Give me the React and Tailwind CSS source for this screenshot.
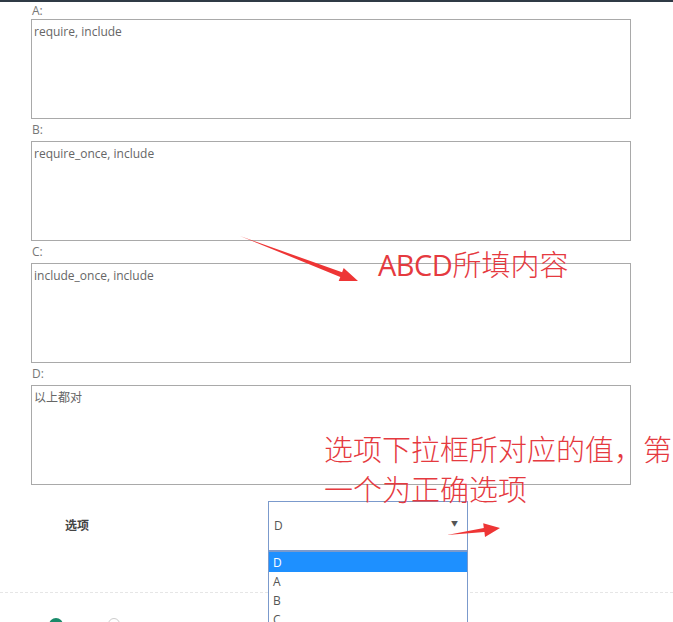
import React from "react";

const items = [
  { k: "A:", v: "require, include" },
  { k: "B:", v: "require_once, include" },
  { k: "C:", v: "include_once, include" },
  { k: "D:", v: "以上都对" },
];

export default function App() {
  return (
    <div className="relative w-[673px] h-[622px] overflow-hidden bg-white font-['Open_Sans','Noto_Sans_CJK_SC',sans-serif] text-[12px] text-[#555]">
      <div className="h-[2px] bg-[#2f3a45]" />
      <div className="pl-[31px]">
        {items.map((it, i) => (
          <div key={it.k}>
            <div className={`flex items-center pl-px ${i === 0 ? "h-[17px]" : "h-[22px]"} text-[#777]`}>{it.k}</div>
            <div className="w-[600px] h-[100px] border border-[#a9a9a9] px-[2px] pt-[3px] leading-[17px] text-[#666]">
              {it.v}
            </div>
          </div>
        ))}
      </div>
      <div className="flex items-center mt-[16px] h-[50px]">
        <div className="w-[268px] pl-[65px] font-bold text-[#444]">选项</div>
        <div className="relative w-[200px] h-[50px] border border-[#7b9acc] flex items-center px-[5px] text-[#555]">
          <span className="flex-1">D</span>
          <span className="text-[7px] text-[#555] pr-[4px] pb-[3px]">▼</span>
          <div className="absolute left-[-1px] top-[49px] w-[200px] bg-white border border-[#7b9acc] z-10 leading-[19px]">
            <div className="bg-[#1e90ff] text-white px-[4px] h-[20px] flex items-center">D</div>
            <div className="px-[4px] h-[19px] flex items-center text-[#555]">A</div>
            <div className="px-[4px] h-[19px] flex items-center text-[#555]">B</div>
            <div className="px-[4px] h-[19px] flex items-center text-[#555]">C</div>
            <div className="px-[4px] h-[19px]" />
          </div>
        </div>
      </div>
      <div className="mt-[41px] border-t border-dashed border-[#e6e6e6]" />
      <div className="flex pl-[49px] gap-[45px] mt-[25px]">
        <div className="w-[14px] h-[14px] rounded-full bg-[#1a8a6a]" />
        <div className="w-[12px] h-[12px] rounded-full border border-[#ccc]" />
      </div>

      <div className="absolute left-[378px] top-[245px] text-[29px] leading-[36px] text-[#e53a3f] font-['Noto_Sans_CJK_SC',sans-serif] font-light whitespace-nowrap">
        <span className="font-['Open_Sans',sans-serif] font-medium tracking-[-0.5px]">ABCD</span>所填内容
      </div>
      <div className="absolute left-[324px] top-[428px] text-[29px] leading-[40px] text-[#e53a3f] font-['Noto_Sans_CJK_SC',sans-serif] font-light whitespace-nowrap">
        <div>选项下拉框所对应的值，第</div>
        <div>一个为正确选项</div>
      </div>
      <svg className="absolute left-0 top-0 pointer-events-none" width="673" height="622">
        <polygon points="240,236 342.1,272.3 343.7,268.1 358,281 338.7,281.1 340.3,276.9" fill="#ee3535" />
        <polygon points="447,535 483.8,528.1 483.2,523.2 500,528 485,537 484.4,532.1" fill="#ee3535" />
      </svg>
    </div>
  );
}
